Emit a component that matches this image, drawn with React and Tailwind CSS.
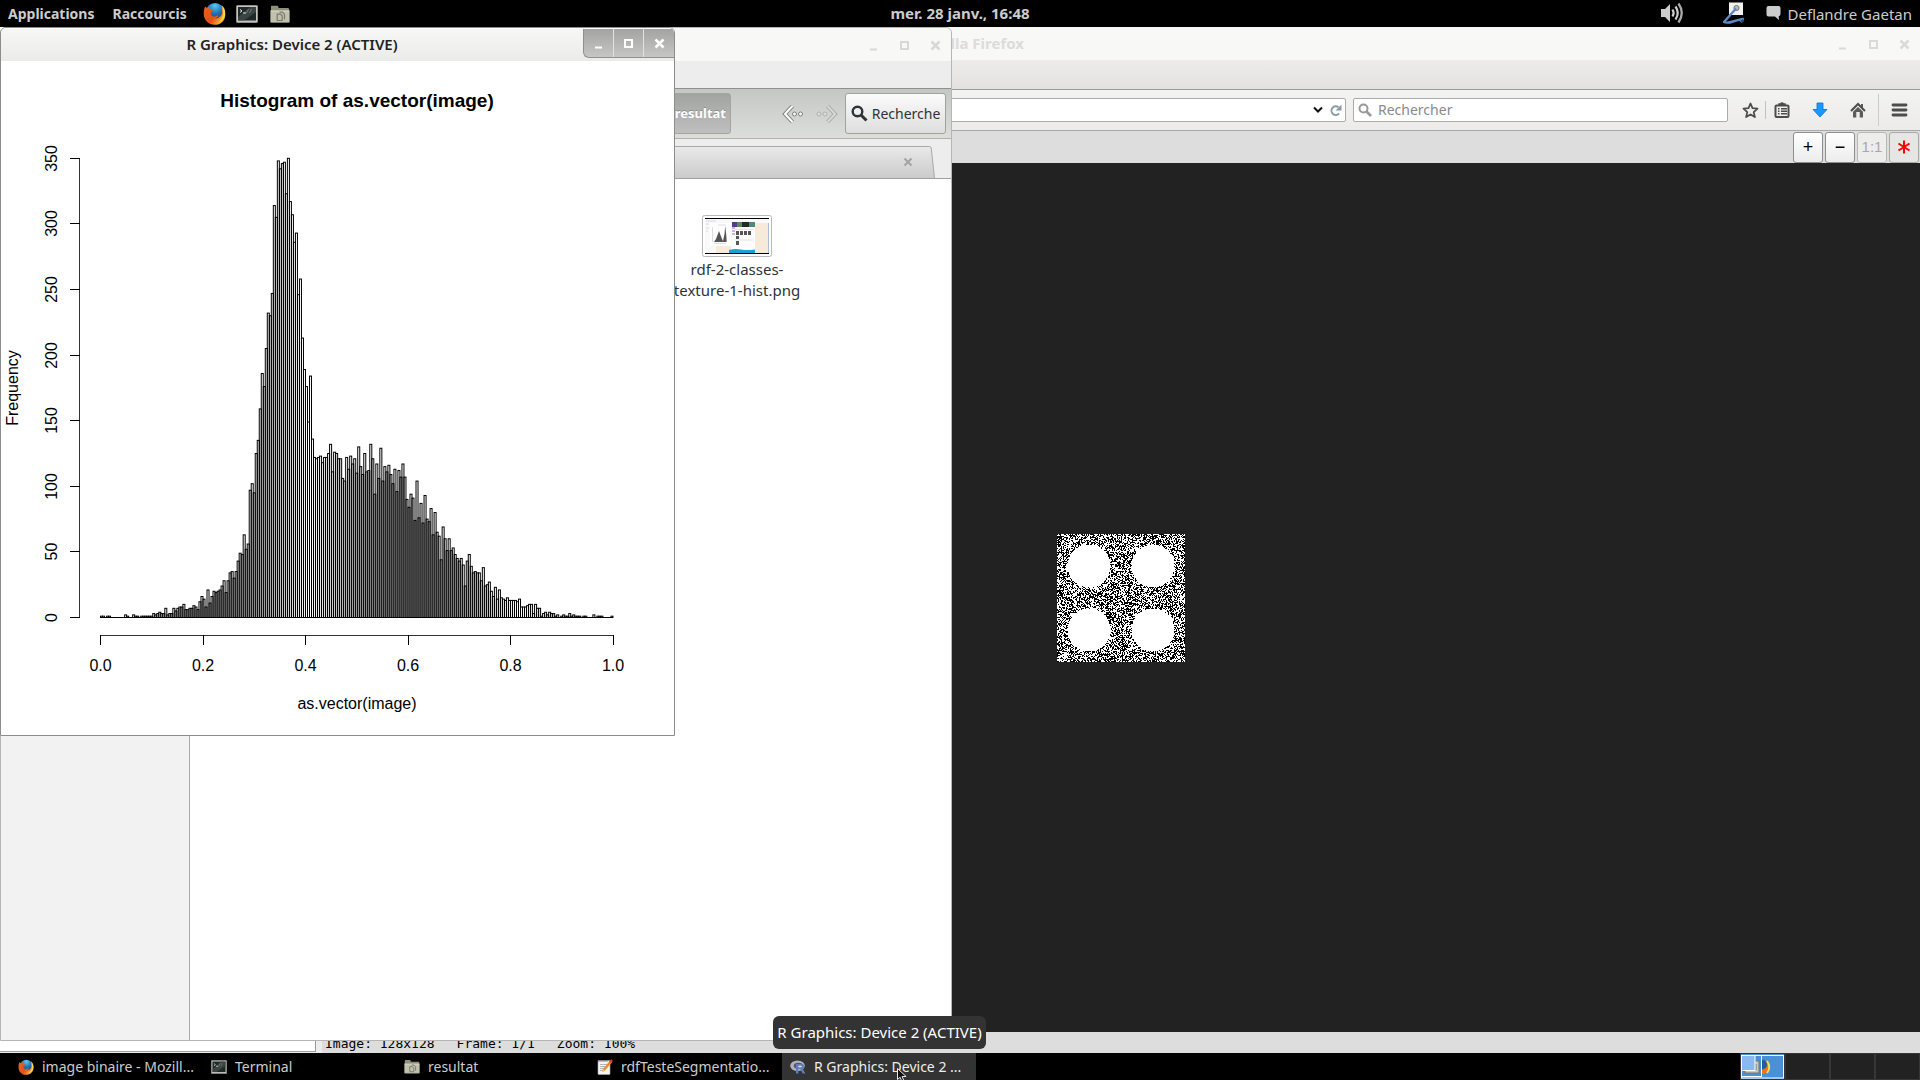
import React from "react";

const COUNTS = [
  1, 1, 0, 1, 1, 0, 0, 0, 0, 0, 0, 0, 2, 1, 0, 0, 2, 1, 1, 0, 1, 1, 1, 1, 1, 1,
  3, 2, 3, 4, 3, 3, 7, 2, 3, 3, 7, 5, 7, 8, 8, 10, 6, 6, 7, 7, 9, 8, 6,
  12, 16, 14, 8, 21, 11, 16, 20, 19, 20, 21, 24, 28, 19, 28, 34, 35, 30, 35,
  43, 49, 48, 63, 52, 56, 97, 102, 95, 125, 135, 159, 186, 176, 205, 232, 230,
  247, 314, 305, 348, 342, 346, 347, 323, 350, 317, 307, 286, 293, 246, 258,
  213, 189, 176, 149, 184, 136, 122, 121, 122, 123, 118, 122, 122, 125, 132,
  111, 126, 125, 121, 121, 106, 104, 122, 113, 123, 117, 121, 110, 130, 115,
  109, 125, 111, 112, 132, 121, 94, 117, 106, 129, 104, 115, 111, 116, 109,
  102, 113, 96, 112, 107, 117, 107, 90, 84, 94, 91, 74, 104, 76, 87, 72, 93,
  75, 73, 83, 63, 80, 65, 62, 44, 69, 60, 51, 60, 51, 53, 48, 45, 43, 45, 40,
  24, 43, 48, 39, 34, 35, 34, 34, 28, 38, 24, 25, 27, 20, 16, 23, 14, 21, 15,
  14, 13, 15, 13, 13, 13, 13, 12, 14, 8, 8, 8, 9, 10, 10, 3, 10, 7, 7, 1, 3,
  4, 2, 4, 3, 3, 1, 2, 0, 1, 2, 1, 1, 3, 1, 2, 1, 1, 1, 0, 1, 1, 0, 0, 0, 2,
  0, 1, 1, 1, 0, 0, 0, 0, 1,
];

const X0 = 99.5;
const X1 = 611.95;
const BASE = 556.5;
const UNIT = 1.312;

function Histogram() {
  const pitch = (X1 - X0) / COUNTS.length;
  return (
    <svg width="673" height="674" className="block font-['Liberation_Sans',sans-serif]" role="img" aria-label="Histogram of as.vector(image)">
      <text x="356" y="46" textAnchor="middle" fontSize="19" fontWeight="700">Histogram of as.vector(image)</text>
      <g fill="none" stroke="#000">
        {COUNTS.map((n, i) => (
          <rect key={i} x={X0 + i * pitch} y={BASE - n * UNIT} width={pitch} height={n * UNIT} />
        ))}
        <path d={`M99 ${BASE}H612`} />
        <path d="M78.500 97V557" stroke="#333" />
        <path d="M99 574.500H613" stroke="#333" />
      </g>
      {[0, 50, 100, 150, 200, 250, 300, 350].map((v) => {
        const y = Math.round(BASE - 0.5 - v * UNIT) + 0.5;
        return (
          <g key={v}>
            <path d={`M69 ${y}H79`} stroke="#000" />
            <text transform={`translate(56 ${y}) rotate(-90)`} textAnchor="middle" fontSize="16">{v}</text>
          </g>
        );
      })}
      {["0.0", "0.2", "0.4", "0.6", "0.8", "1.0"].map((v, i) => (
        <g key={v}>
          <path d={`M${Math.floor(X0 + i * 102.5) + 0.5} 574V584`} stroke="#000" />
          <text x={X0 + i * 102.5} y="610" textAnchor="middle" fontSize="16">{v}</text>
        </g>
      ))}
      <text x="356" y="648" textAnchor="middle" fontSize="16">as.vector(image)</text>
      <text transform="translate(17 327) rotate(-90)" textAnchor="middle" fontSize="16">Frequency</text>
    </svg>
  );
}

const CENTERS = [[31.5, 31.5], [95.5, 31.5], [31.5, 95.5], [95.5, 95.5]];

function noisePath() {
  let seed = 20150128;
  let d = "";
  for (let y = 0; y < 128; y++) {
    for (let x = 0; x < 128; x++) {
      seed = (Math.imul(seed, 1664525) + 1013904223) >>> 0;
      const inside = CENTERS.some(([cx, cy]) => (x - cx) ** 2 + (y - cy) ** 2 < 21.5 ** 2);
      if (!inside && (seed >>> 16) % 100 < 48) d += `M${x} ${y}h1v1h-1z`;
    }
  }
  return d;
}
const NOISE = noisePath();

function BinaryImage() {
  return (
    <svg width="128" height="128" shapeRendering="crispEdges" className="block bg-white" role="img" aria-label="image binaire">
      <path d={NOISE} fill="#000" />
    </svg>
  );
}

function FirefoxIcon({ className }) {
  return (
    <svg viewBox="0 0 24 24" className={className} aria-hidden="true">
      <defs>
        <radialGradient id="globe" cx="0.5" cy="0.15" r="0.8">
          <stop offset="0" stopColor="#5cc8f0" />
          <stop offset="0.5" stopColor="#1f78c0" />
          <stop offset="1" stopColor="#123a7a" />
        </radialGradient>
        <linearGradient id="fox" x1="0" y1="0" x2="1" y2="0.6">
          <stop offset="0" stopColor="#e8641b" />
          <stop offset="0.6" stopColor="#e2501a" />
          <stop offset="1" stopColor="#fbc02d" />
        </linearGradient>
      </defs>
      <circle cx="12.5" cy="10.5" r="9.5" fill="url(#globe)" />
      <path d="M2.2 4.6c.8.9 1.4 1.2 2.4 1.3 1.2-.9 2.600-.9 3.600-.3-.8.5-1.100 1.100-1 1.800 1.300.3 2.800 0 3.400.5.2 1-1.700 1.600-2.100 2.300.2 1.300-.2 1.900-.2 2.700.6 1.700 2.400 2.600 4.300 2.100 1.400-.3 2.200-1.300 3.400-.8-.4 1.400-2 2.600-3.800 2.800 4 .6 7.600-2.300 7.800-6.200.1-2.400-.6-4.200-1.600-5.800 2.900 1.900 4.900 4.600 4.900 8.200 0 6-5 10.600-11.200 10.600S.8 19 .8 12.600c0-3.100.4-5.500 1.400-8z" fill="url(#fox)" />
      <path d="M19.300 3.400c3 2.200 4.300 5.400 3.800 9.200-.6 4-3.200 7.200-7.200 8.600 3.400-2.400 5-5.300 5-9.200 0-3.300-.5-6-1.600-8.600z" fill="#ffd84a" />
    </svg>
  );
}

function TerminalIcon({ className }) {
  return (
    <svg viewBox="0 0 22 18" className={className} preserveAspectRatio="none" aria-hidden="true">
      <rect x="0.5" y="0.5" width="21" height="17" rx="0.8" fill="#c3c5bf" stroke="#8f918c" />
      <rect x="2" y="2" width="18" height="13.500" fill="#20282a" />
      <path d="M2 12 14 2h6v5L8 15.500H2z" fill="#44504f" opacity="0.7" />
      <path d="M4 4.500l2 1.500-2 1.500M7 8h3" stroke="#e8e8e8" fill="none" />
      <path d="M10.500 8l2-4M13.500 8l2-4" stroke="#6e7a78" fill="none" />
    </svg>
  );
}

function FolderIcon({ className }) {
  return (
    <svg viewBox="0 0 20 18" className={className} aria-hidden="true">
      <path d="M1 3V1.500Q1 .8 1.700.8h5.600q.7 0 .9.700L8.600 3H18q1 0 1 1v4H1z" fill="#8f907c" />
      <rect x="0.500" y="5.200" width="19" height="12.300" rx="0.8" fill="#c0c1ae" stroke="#85866f" strokeWidth="0.700" />
      <path d="M1 6h18" stroke="#dcddd0" />
      <path d="M7.200 9.200h3.300l1.700 1.800v4.500h-5z" fill="none" stroke="#7a7b67" strokeWidth="1.200" />
      <path d="M9.500 7.200h3l2 2.200v4.800" fill="none" stroke="#7a7b67" strokeWidth="1.200" />
    </svg>
  );
}

function EditorIcon({ className }) {
  return (
    <svg viewBox="0 0 16 16" className={className} aria-hidden="true">
      <rect x="1" y="1.500" width="12" height="14" rx="0.700" fill="#f4f4f2" stroke="#aaa" strokeWidth="0.600" />
      <path d="M2 1v2M4 1v2M6 1v2M8 1v2M10 1v2" stroke="#777" strokeWidth="0.900" />
      <path d="M3 5.500h7M3 7.500h5M3 9.500h4M3 11.500h3" stroke="#aaa" strokeWidth="0.900" />
      <path d="M5 13l1-3 7-8.500 2 1.700-7.200 8.500z" fill="#f08a28" />
      <path d="M12 2.700L13.600.7q1.300-.5 2.100 1.200l-1.600 2.300z" fill="#e03a2a" />
      <path d="M5 13l1-3 1.800 1.700z" fill="#e8c9a0" />
    </svg>
  );
}

function RIcon({ className }) {
  return (
    <svg viewBox="0 0 16 14" className={className} aria-hidden="true">
      <ellipse cx="7.500" cy="5.800" rx="7.300" ry="5.200" fill="#b0b3b8" />
      <ellipse cx="8.300" cy="5.800" rx="4.600" ry="3" fill="#55585c" />
      <path d="M6 4h5.200q3 0 3 2.400 0 1.800-1.600 2.200l2.800 4.800h-2.700L10.200 9H8.400v4.400H6z" fill="#5f7fb8" />
      <path d="M8.400 5.700h2.300q1.100 0 1.100.8t-1.100.8H8.400z" fill="#dfe5f0" />
    </svg>
  );
}

function WindowButtons({ tone, className, buttonClass }) {
  const shapes = [
    ["Réduire", <path key="a" d="M3 11.500h7" strokeWidth="2" />],
    ["Agrandir", <rect key="b" x="3" y="4" width="7" height="7" strokeWidth="2" />],
    ["Fermer", <path key="c" d="M2.500 3.500l8 8M10.500 3.500l-8 8" strokeWidth="2.500" />],
  ];
  return (
    <div className={className}>
      {shapes.map(([label, shape]) => (
        <button key={label} type="button" aria-label={label} className={buttonClass}>
          <svg width="13" height="14" fill="none" className={tone}>{shape}</svg>
        </button>
      ))}
    </div>
  );
}

function TopPanel() {
  return (
    <header className="grid h-[27px] shrink-0 grid-cols-[1fr_auto_1fr] items-center bg-black text-sm text-[#cccccc]">
      <nav className="flex items-center pl-2">
        <button type="button" className="font-bold">Applications</button>
        <button type="button" className="ml-[18px] font-bold">Raccourcis</button>
        <button type="button" aria-label="Firefox" className="ml-4"><FirefoxIcon className="h-[23px] w-[23px]" /></button>
        <button type="button" aria-label="Terminal" className="ml-2.5"><TerminalIcon className="h-[18px] w-[22px]" /></button>
        <button type="button" aria-label="Fichiers" className="ml-3"><FolderIcon className="h-[18px] w-5" /></button>
      </nav>
      <time className="text-[15px] font-bold">mer. 28 janv., 16:48</time>
      <div className="flex items-center justify-end pr-2">
        <button type="button" aria-label="Volume">
          <svg width="24" height="22" viewBox="0 0 24 22" fill="none" stroke="#ccc" className="-mt-0.5">
            <path d="M1 7h4l5-5v18l-5-5H1z" fill="#ccc" stroke="none" />
            <path d="M12.500 7.500q2.200 3.500 0 7" strokeWidth="2.200" />
            <path d="M15.500 4.500q4.500 6.500 0 13" strokeWidth="2.200" />
            <path d="M18.500 1.500q6.500 9.500 0 19" strokeWidth="2.300" stroke="#aaa" />
          </svg>
        </button>
        <button type="button" aria-label="Tablette" className="ml-[38px]">
          <svg width="24" height="22" viewBox="0 0 24 22" fill="none" className="-mt-0.5">
            <rect x="7" y="0.500" width="14" height="12.500" fill="#f2f2f2" />
            <circle cx="14.500" cy="6" r="2.600" fill="#b8b8b8" stroke="#777" />
            <path d="M14 6.500L2 20q3 1.500 9-.5t10-2.500l-2.500 3" stroke="#5b8ac6" strokeWidth="2.400" strokeLinejoin="round" />
            <path d="M19 20l2.500-2" stroke="#27486f" strokeWidth="2.400" />
          </svg>
        </button>
        <button type="button" className="ml-5 flex items-center gap-1.5 text-[15px] leading-5">
          <svg width="15" height="16" viewBox="0 0 15 16" className="-mt-0.5">
            <path d="M2.500 1h10Q14.500 1 14.500 3v6q0 2-1.800 2.300L13 15 9 11.500H2.500Q.5 11.500.5 9.500V3q0-2 2-2z" fill="#ccc" />
          </svg>
          Deflandre Gaetan
        </button>
      </div>
    </header>
  );
}

function FirefoxWindow() {
  const tool = "flex h-[31px] w-[30px] items-center justify-center rounded-[3px] border font-['Liberation_Sans',sans-serif]";
  return (
    <section aria-label="Mozilla Firefox" className="absolute inset-0 flex flex-col bg-[#dddddd]">
      <div className="flex h-[33px] shrink-0 items-center justify-between bg-[#f8f8f7]">
        <h2 className="w-[1024px] text-right text-[15px] font-bold text-[#dcdcda]">Mozilla Firefox</h2>
        <WindowButtons className="flex gap-[18px] pr-[9px]" buttonClass="block" tone="stroke-[#dadad9]" />
      </div>
      <div className="h-[30px] shrink-0 border-b border-[#999999] bg-linear-to-b from-[#edeceb] to-[#e3e2e0]" />
      <div className="flex h-[41px] shrink-0 items-center border-b border-[#a8a8a8] bg-linear-to-b from-[#f3f3f2] to-[#ecebea] pl-[120px] pr-3">
        <div className="flex h-6 min-w-0 flex-1 items-center rounded-[2px] border border-[#ababab] bg-white pr-[3px]">
          <input type="text" aria-label="Adresse" className="min-w-0 flex-1 outline-none" />
          <button type="button" aria-label="Historique">
            <svg width="10" height="8" viewBox="0 0 10 8" fill="none" stroke="#111" strokeWidth="2"><path d="M1 1.500l4 4 4-4" /></svg>
          </button>
          <button type="button" aria-label="Recharger" className="ml-1.5">
            <svg width="13" height="13" viewBox="0 0 13 13" fill="none" stroke="#8b9baa" strokeWidth="2">
              <path d="M9.500 3.300A4.300 4.300 0 1 0 10 9.500" /><path d="M12.500.5v6h-6z" fill="#8b9baa" stroke="none" />
            </svg>
          </button>
        </div>
        <label className="ml-[7px] flex h-6 w-[375px] items-center gap-1.5 rounded-[2px] border border-[#ababab] bg-white pl-1">
          <svg width="14" height="14" viewBox="0 0 14 14" fill="none" stroke="#999"><circle cx="5.500" cy="5.500" r="4" strokeWidth="2" /><path d="M8.500 8.500l4.500 4.500" strokeWidth="2.600" /></svg>
          <input type="search" aria-label="Rechercher" placeholder="Rechercher" className="min-w-0 flex-1 text-sm outline-none placeholder:text-[#8a8a8a]" />
        </label>
        <button type="button" aria-label="Marquer" className="ml-3.5">
          <svg width="17" height="17" viewBox="0 0 17 17" fill="none" stroke="#4c4c4c" strokeWidth="1.800" strokeLinejoin="round"><path d="M8.500 1.500l2 4.700 5 .5-3.800 3.400 1.200 5-4.400-2.700-4.400 2.700 1.200-5L1.500 6.700l5-.5z" /></svg>
        </button>
        <span className="ml-[6px] h-[18px] w-px bg-[#b9c4cf]" />
        <button type="button" aria-label="Marque-pages" className="ml-2">
          <svg width="16" height="16" viewBox="0 0 16 16" fill="none" stroke="#4c4c4c"><rect x="1.500" y="3.500" width="13" height="11.500" rx="1" strokeWidth="2" /><path d="M5 3V2h1.500q1.500-2 3 0H11v1z" fill="#4c4c4c" strokeWidth="1.500" /><path d="M4 6.700h1.500M7 6.700h6M4 9.200h1.500M7 9.200h6M4 11.700h1.500M7 11.700h6" strokeWidth="1.400" /></svg>
        </button>
        <button type="button" aria-label="Téléchargements" className="ml-[22px]">
          <svg width="16" height="16" viewBox="0 0 16 16"><path d="M5 1h6v6.500h4L8 15 1 7.500h4z" fill="#1b98ff" stroke="#0a6fd0" strokeWidth="0.800" /></svg>
        </button>
        <button type="button" aria-label="Accueil" className="ml-[22px]">
          <svg width="16" height="16" viewBox="0 0 16 16" fill="none"><path d="M1 9l7-7 7 7" stroke="#4c4c4c" strokeWidth="2" /><path d="M3 9.800L8 5l5 4.800V15.500H9.700V10H6.300v5.500H3z" fill="#5c5c5c" /><path d="M12 2v3" stroke="#4c4c4c" strokeWidth="1.800" /></svg>
        </button>
        <span className="ml-3 h-8 w-px bg-[#c4ccd5]" />
        <button type="button" aria-label="Menu" className="ml-3">
          <svg width="17" height="14" viewBox="0 0 17 14" stroke="#4c4c4c" strokeWidth="2.800" strokeLinecap="round"><path d="M2 2h13M2 7h13M2 12h13" /></svg>
        </button>
      </div>
      <div className="flex h-8 shrink-0 items-center justify-end gap-0.5 bg-[#dddddd] pr-px">
        <button type="button" aria-label="Zoom avant" className={`${tool} border-[#8e8e8e] bg-linear-to-b from-white to-[#ececec] text-lg text-black`}>+</button>
        <button type="button" aria-label="Zoom arrière" className={`${tool} border-[#8e8e8e] bg-linear-to-b from-white to-[#ececec] text-lg text-black`}>−</button>
        <button type="button" disabled className={`${tool} border-[#b8b8b6] bg-[#ededec] text-[15px] text-[#a8a8a6]`}>1:1</button>
        <button type="button" aria-label="Paramètres" className={`${tool} border-[#a8a8a6] bg-[#e6e6e5]`}>
          <svg width="14" height="14" viewBox="0 0 14 14" stroke="#f00" strokeWidth="2"><path d="M7 .5v13M1.500 3.500l11 7M12.500 3.500l-11 7" /></svg>
        </button>
      </div>
      <div className="relative min-h-0 flex-1 bg-[#222222]">
        <div className="absolute left-[1057px] top-[371px]"><BinaryImage /></div>
      </div>
      <div className="flex h-[21px] shrink-0 items-end bg-[#ededed] text-[13px] text-black">
        <div className="h-[20px] w-[316px] self-start border-b border-r border-[#9b9b98] bg-white" />
        <p className="ml-1.5 flex h-full flex-1 items-end gap-[22px] bg-[#dddddd] pl-[3px] font-['DejaVu_Sans_Mono',monospace] leading-[18px]">
          <span>Image: 128x128</span><span>Frame: 1/1</span><span>Zoom: 100%</span>
        </p>
      </div>
    </section>
  );
}

function Thumbnail() {
  return (
    <svg width="70" height="42" viewBox="0 0 70 42" aria-hidden="true">
      <rect x="0.500" y="0.500" width="69" height="41" rx="2" fill="#fff" stroke="#b9bab5" />
      <rect x="3" y="3" width="64" height="36" fill="#f9f9f9" />
      <path d="M3 3h64v1H3zM3 38h64v1H3z" fill="#000" />
      <rect x="53" y="8" width="14" height="30" fill="#f8ead8" /><rect x="14" y="31" width="15" height="7" fill="#f8ead8" />
      <rect x="66" y="8" width="1" height="30" fill="#a9bfe0" />
      <rect x="8" y="8" width="21" height="23" fill="#fff" />
      <path d="M12 27l2-3 3-8 3 8 1 2 1.500-7 .7-8 1 8 .5 8z" fill="#555" />
      <path d="M10.500 12v15M12 28.500h12M16 10h8" stroke="#bbb" strokeWidth="0.500" />
      <path d="M4 6h10M4 9h3M4 13h3M4 16h2" stroke="#b8c4d0" strokeWidth="0.600" />
      <rect x="30" y="7" width="23" height="31" fill="#fcfcfc" />
      <path d="M30 7h5v5h-5z" fill="#5a3a8a" /><path d="M35 7h5v5h-5z" fill="#5d8560" /><path d="M40 7h7v5h-7z" fill="#222a24" /><path d="M47 7h6v5h-6z" fill="#4e8a7c" />
      <path d="M34 16h3v4h-3zM38 16h3v4h-3zM42 16h3v4h-3zM46 16h3v4h-3zM34 21h3v3h-3zM34 26h3v4h-3z" fill="#555" />
      <path d="M30 13h3M30 16h3M30 19h3" stroke="#7a4cc0" strokeWidth="0.800" />
      <path d="M33 14.500h18M33 25h18" stroke="#ccc" strokeWidth="0.500" />
      <path d="M27 35q6-1.500 12-.5t14 0V38H27z" fill="#1da0d8" />
    </svg>
  );
}

function NautilusWindow() {
  return (
    <section aria-label="resultat" className="absolute bottom-3 left-0 top-0 flex w-[952px] flex-col overflow-hidden rounded-t-md border border-[#b5b5b3] bg-[#ededed]">
      <div className="flex h-[33px] shrink-0 items-center justify-end bg-[#f8f8f7] pr-[9px]">
        <WindowButtons className="flex gap-[18px]" buttonClass="block" tone="stroke-[#d8d8d6]" />
      </div>
      <div className="h-[27px] shrink-0 bg-[#ededed]" />
      <div className="flex h-[51px] shrink-0 items-center justify-end border-b border-t border-b-[#b0b0ae] border-t-[#8f918f] bg-linear-to-b from-[#c4c7c4] to-[#dcdedc] pr-[5px]">
        <button type="button" className="h-[41px] rounded-[3px] border border-[#a3a5a3] bg-linear-to-b from-[#a2a4a2] to-[#bebfbe] pl-10 pr-1 text-[13px] font-bold text-white [text-shadow:0_-1px_0_#8b8d8b]">resultat</button>
        <button type="button" aria-label="Précédent" className="ml-[51px]">
          <svg width="22" height="20" viewBox="0 0 22 20" fill="none"><path d="M10.500 2L3 10l7.500 8" stroke="#7d7f7d" strokeWidth="4" /><path d="M10.500 2L3 10l7.500 8" stroke="#fff" strokeWidth="2" /><circle cx="12.500" cy="10" r="2" fill="#f8f8f8" stroke="#7d7f7d" /><circle cx="18.500" cy="10" r="2" fill="#f8f8f8" stroke="#7d7f7d" /></svg>
        </button>
        <button type="button" aria-label="Suivant" disabled className="ml-3">
          <svg width="22" height="20" viewBox="0 0 22 20" fill="none"><path d="M11.500 2L19 10l-7.500 8" stroke="#a9aba9" strokeWidth="4" /><path d="M11.500 2L19 10l-7.500 8" stroke="#d6d8d6" strokeWidth="2" /><circle cx="3" cy="10" r="2" fill="#dcdedc" stroke="#b0b2b0" /><circle cx="9" cy="10" r="2" fill="#dcdedc" stroke="#b0b2b0" /></svg>
        </button>
        <button type="button" className="ml-[7px] flex h-[41px] w-[101px] items-center justify-center gap-1 rounded-[3px] border border-[#a0a2a0] bg-linear-to-b from-[#fbfbfb] to-[#dedede] text-sm text-[#2e3436]">
          <svg width="17" height="17" viewBox="0 0 17 17" fill="none" stroke="#2e3436"><circle cx="6.500" cy="6.500" r="4.800" strokeWidth="2.400" /><path d="M10 10l5.500 5.500" strokeWidth="3" /></svg>
          Recherche
        </button>
      </div>
      <div className="flex h-10 shrink-0 items-end border-b border-[#a0a09e] pr-4">
        <div className="flex h-8 min-w-0 flex-1 items-center justify-end border-t border-[#a8a8a6] bg-linear-to-b from-[#e9e9e9] to-[#cbcbcb] pr-[15px]">
          <button type="button" aria-label="Fermer l'onglet">
            <svg width="10" height="10" viewBox="0 0 10 10" stroke="#a2a4a2" strokeWidth="2" className="mb-0.5"><path d="M1.500 1.500l7 7M8.500 1.500l-7 7" /></svg>
          </button>
        </div>
        <svg width="7" height="32" viewBox="0 0 7 32" fill="none">
          <defs><linearGradient id="tab" x1="0" y1="0" x2="0" y2="1"><stop offset="0" stopColor="#e9e9e9" /><stop offset="1" stopColor="#cbcbcb" /></linearGradient></defs>
          <path d="M0 .5h1.500Q3 .5 3.200 2L6.500 32H0z" fill="url(#tab)" /><path d="M0 .5h1.500Q3 .5 3.200 2L6.500 32" stroke="#a8a8a6" />
        </svg>
      </div>
      <div className="flex min-h-0 flex-1">
        <aside className="w-[189px] border-r border-[#a8a8a6] bg-[#f2f2f2]" />
        <div className="flex flex-1 justify-end bg-white pr-[134px] pt-9">
          <figure className="flex w-[160px] flex-col items-center text-center text-[15px] leading-[21px] text-[#2e3436]">
            <Thumbnail />
            <figcaption className="mt-0.5">rdf-2-classes-<br />texture-1-hist.png</figcaption>
          </figure>
        </div>
      </div>
    </section>
  );
}

function RWindow() {
  return (
    <section aria-label="R Graphics: Device 2 (ACTIVE)" className="absolute left-0 top-0 w-[675px] overflow-hidden rounded-t-md border border-[#8c8c8c] bg-white">
      <div className="flex h-[33px] items-start border-t border-white bg-linear-to-b from-[#f7f7f6] to-[#ebebea]">
        <h1 className="flex h-[31px] flex-1 items-center justify-center text-[15px] font-semibold text-[#1f2324]">R Graphics: Device 2 (ACTIVE)</h1>
        <WindowButtons
          className="flex h-[29px] divide-x divide-[#e2e2e0] overflow-hidden rounded-bl-md border-b border-l border-[#8f8f8d] bg-linear-to-b from-[#a3a3a1] to-[#c6c6c4]"
          buttonClass="flex w-[30px] items-center justify-center"
          tone="stroke-white"
        />
      </div>
      <Histogram />
    </section>
  );
}

const TASKS = [
  ["image binaire - Mozill...", <FirefoxIcon key="i" className="h-4 w-4" />],
  ["Terminal", <TerminalIcon key="i" className="h-[14px] w-4" />],
  ["resultat", <FolderIcon key="i" className="h-[15px] w-4" />],
  ["rdfTesteSegmentatio...", <EditorIcon key="i" className="h-4 w-4" />],
  ["R Graphics: Device 2 ...", <RIcon key="i" className="h-[14px] w-4" />],
];

function BottomPanel() {
  return (
    <footer className="flex h-[27px] shrink-0 items-stretch justify-between bg-black pl-2.5 text-sm text-[#cccccc]">
      <div className="flex">
        {TASKS.map(([label, icon], i) => (
          <button
            key={label}
            type="button"
            className={i === 4 ? "flex w-[194px] items-center gap-2 bg-[#333333] pl-2 text-[#eeeeee]" : "flex w-[193px] items-center gap-2 pl-2"}
          >
            {icon}
            {label}
          </button>
        ))}
      </div>
      <div className="flex">
        <button type="button" aria-label="Espace de travail 1" className="w-[45px] border border-[#333333] bg-[#4a90d9]">
          <svg width="43" height="25" viewBox="0 0 43 25" className="block">
            <rect x="0.500" y="1.500" width="42" height="22.500" fill="#4a90d9" stroke="#fff" />
            <circle cx="22" cy="13" r="6.800" fill="#e8741b" /><circle cx="21" cy="10.500" r="5" fill="#1f5f9c" /><path d="M26 7q4.500 6 0 12" stroke="#ffd84a" strokeWidth="2" fill="none" />
            <rect x="0.500" y="1.500" width="20" height="21" fill="#4a90d9" stroke="#fff" />
            <rect x="4" y="7" width="14" height="12" fill="#c9cabb" stroke="#74756a" />
            <path d="M10 10h5v6h-5" fill="none" stroke="#74756a" />
            <rect x="0.500" y="1.500" width="13.500" height="15" fill="#8ab9f1" stroke="#fff" />
          </svg>
        </button>
        {[2, 3, 4].map((n) => (
          <button key={n} type="button" aria-label={`Espace de travail ${n}`} className="w-[45px] border border-[#363636] bg-[#222222]" />
        ))}
      </div>
    </footer>
  );
}

export default function App() {
  return (
    <div className="relative flex h-screen flex-col overflow-hidden bg-black font-['Noto_Sans','Open_Sans',sans-serif]">
      <TopPanel />
      <main className="relative min-h-0 flex-1 overflow-hidden">
        <FirefoxWindow />
        <NautilusWindow />
        <RWindow />
      </main>
      <BottomPanel />
      <div role="tooltip" className="absolute bottom-[31px] left-[773px] flex h-[33px] w-[213px] items-center justify-center rounded-md bg-[#333333] text-[15px] text-white">
        R Graphics: Device 2 (ACTIVE)
      </div>
      <svg width="12" height="17" viewBox="0 0 12 17" className="absolute -bottom-1 left-[896px]" aria-hidden="true">
        <path d="M1.500 1.500v11l2.600-2.300 2.600 6.300 2-1-2.600-6h4z" fill="#111" stroke="#fff" strokeWidth="0.900" />
      </svg>
    </div>
  );
}
